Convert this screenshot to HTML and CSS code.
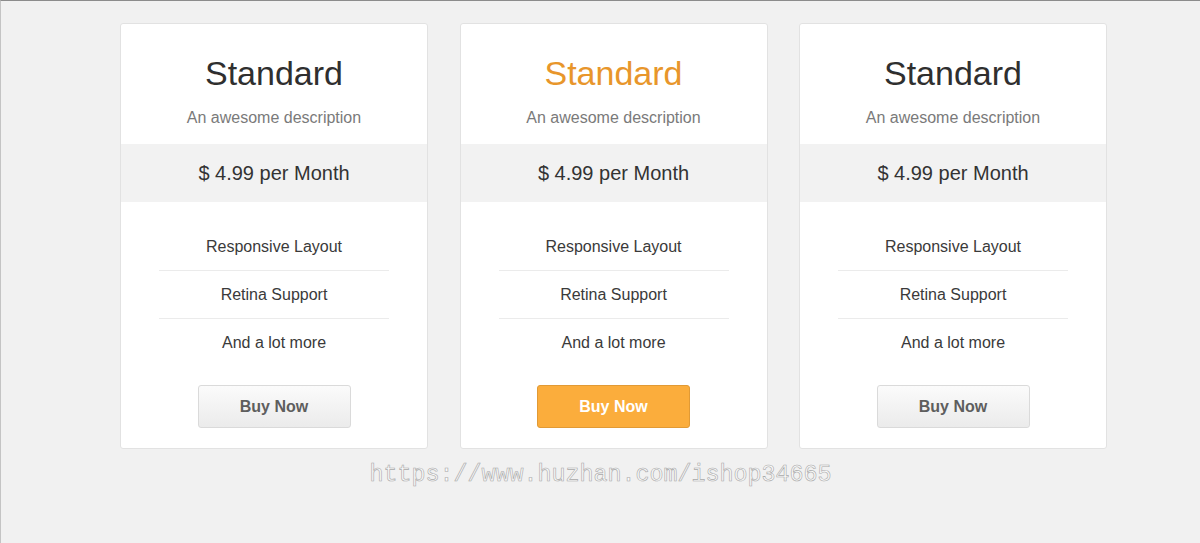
FILE: index.html
```html
<!DOCTYPE html>
<html>
<head>
<meta charset="utf-8">
<link rel="stylesheet" href="styles.css">
</head>
<body>
<div class="page">
  <div class="plans">
    <div class="card">
      <div class="head">
        <h2 class="title">Standard</h2>
        <p class="desc">An awesome description</p>
      </div>
      <div class="price">$ 4.99 per Month</div>
      <ul class="features">
        <li>Responsive Layout</li>
        <li>Retina Support</li>
        <li>And a lot more</li>
      </ul>
      <div class="action"><a class="btn">Buy Now</a></div>
    </div>
    <div class="card featured">
      <div class="head">
        <h2 class="title">Standard</h2>
        <p class="desc">An awesome description</p>
      </div>
      <div class="price">$ 4.99 per Month</div>
      <ul class="features">
        <li>Responsive Layout</li>
        <li>Retina Support</li>
        <li>And a lot more</li>
      </ul>
      <div class="action"><a class="btn btn-orange">Buy Now</a></div>
    </div>
    <div class="card">
      <div class="head">
        <h2 class="title">Standard</h2>
        <p class="desc">An awesome description</p>
      </div>
      <div class="price">$ 4.99 per Month</div>
      <ul class="features">
        <li>Responsive Layout</li>
        <li>Retina Support</li>
        <li>And a lot more</li>
      </ul>
      <div class="action"><a class="btn">Buy Now</a></div>
    </div>
  </div>
  <div class="watermark">https://www.huzhan.com/ishop34665</div>
</div>
</body>
</html>
```

FILE: styles.css
```css
html, body {
  margin: 0;
  padding: 0;
  height: 543px;
  overflow: hidden;
}
body {
  background: #f1f1f1;
  font-family: "Liberation Sans", Arial, sans-serif;
  color: #333;
}
.page {
  box-sizing: border-box;
  height: 543px;
  border-top: 1px solid #8c8c8c;
  border-left: 1px solid #c4c4c4;
  padding-top: 22px;
}
.plans {
  display: flex;
  gap: 31.5px;
  padding-left: 119px;
}
.card {
  box-sizing: border-box;
  width: 308px;
  height: 426px;
  background: #fff;
  border: 1px solid #e2e2e2;
  border-radius: 3px;
  text-align: center;
}
.head {
  padding: 29px 0 16px;
}
.title {
  margin: 0;
  font-size: 34px;
  line-height: 40px;
  font-weight: normal;
  color: #2f2f2f;
}
.featured .title {
  color: #e8962b;
}
.desc {
  margin: 14.5px 0 0;
  font-size: 16px;
  line-height: 20px;
  color: #7a7a7a;
}
.price {
  height: 58px;
  line-height: 58px;
  font-size: 20px;
  background: #f2f2f2;
  color: #333;
}
.features {
  list-style: none;
  margin: 21px 38px 0;
  padding: 0;
}
.features li {
  height: 47px;
  line-height: 47px;
  font-size: 16px;
  color: #3a3a3a;
  border-bottom: 1px solid #ebebeb;
}
.features li:last-child {
  border-bottom: none;
}
.action {
  padding-top: 19px;
  display: flex;
  justify-content: center;
}
.btn {
  box-sizing: border-box;
  display: block;
  width: 153px;
  height: 43px;
  line-height: 41px;
  font-size: 16px;
  font-weight: bold;
  color: #5e5e5e;
  border: 1px solid #dadada;
  border-radius: 3px;
  background: linear-gradient(#fbfbfb, #ebebeb);
}
.btn-orange {
  color: #fff;
  border-color: #e19a35;
  background: #fbad3c;
}
.watermark {
  margin-top: 14px;
  text-align: center;
  font-family: "Liberation Mono", "Courier New", monospace;
  font-size: 23.33px;
  line-height: 24px;
  color: #fafafa;
  -webkit-text-stroke: 0.6px #a8a8a8;
}
```
